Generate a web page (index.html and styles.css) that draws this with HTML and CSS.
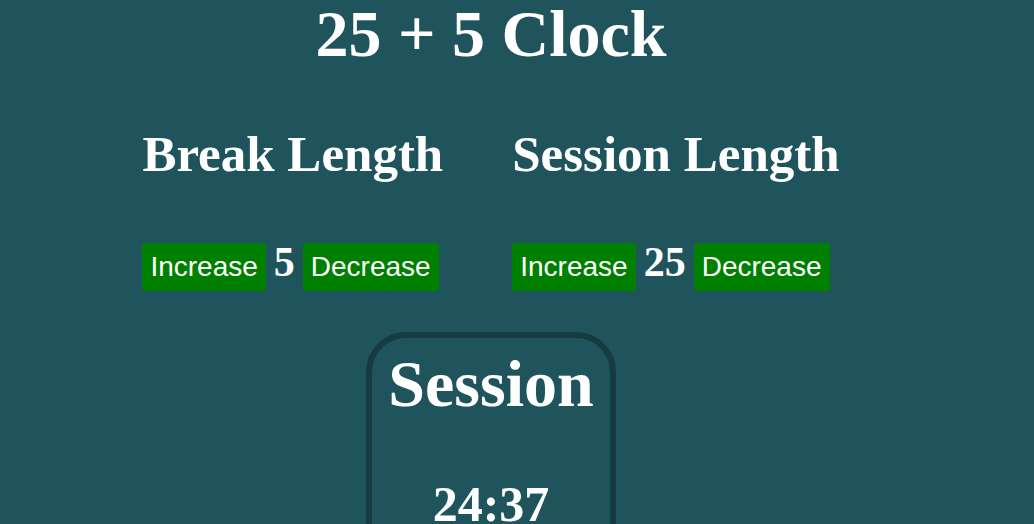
FILE: index.html
```html
<!DOCTYPE html>
<html lang="en">
<head>
<meta charset="utf-8">
<title>25 + 5 Clock</title>
<link rel="stylesheet" href="styles.css">
</head>
<body>
<div class="app">
  <h1 class="title">25 + 5 Clock</h1>
  <div class="lengths">
    <div class="length">
      <h2 class="length-label">Break Length</h2>
      <div class="controls">
        <button class="btn">Increase</button>
        <span class="value">5</span>
        <button class="btn">Decrease</button>
      </div>
    </div>
    <div class="length">
      <h2 class="length-label">Session Length</h2>
      <div class="controls">
        <button class="btn">Increase</button>
        <span class="value">25</span>
        <button class="btn">Decrease</button>
      </div>
    </div>
  </div>
  <div class="timer">
    <h2 class="timer-label">Session</h2>
    <div class="time-left">24:37</div>
  </div>
</div>
</body>
</html>
```
FILE: styles.css
```css
html, body {
  margin: 0;
  padding: 0;
}
body {
  background: #1f545c;
  color: #ffffff;
  font-family: "Liberation Serif", "Times New Roman", serif;
  font-weight: bold;
}
.app {
  width: 982px;
  display: flex;
  flex-direction: column;
  align-items: center;
  padding-top: 1px;
}
.title {
  margin: 0;
  font-size: 66px;
  line-height: 1;
}
.lengths {
  display: flex;
  justify-content: center;
  gap: 69px;
  margin-top: 62px;
}
.length {
  display: flex;
  flex-direction: column;
  align-items: flex-start;
}
.length-label {
  margin: 0;
  font-size: 51px;
  line-height: 1;
}
.controls {
  display: flex;
  align-items: baseline;
  gap: 8px;
  margin-top: 61px;
}
.btn {
  height: 48px;
  padding: 0 8px;
  border: none;
  border-radius: 3px;
  background: #008000;
  color: #ffffff;
  font-family: "Liberation Sans", Arial, sans-serif;
  font-weight: normal;
  font-size: 28px;
  line-height: 46px;
}
.value {
  font-size: 42px;
  line-height: 1;
}
.timer {
  margin-top: 41px;
  width: 250px;
  box-sizing: border-box;
  border: 6px solid #163b41;
  border-radius: 40px;
  padding: 13px 0 40px;
  display: flex;
  flex-direction: column;
  align-items: center;
}
.timer-label {
  margin: 0;
  font-size: 66px;
  line-height: 1;
}
.time-left {
  margin-top: 62px;
  font-size: 50px;
  line-height: 1;
}
```
